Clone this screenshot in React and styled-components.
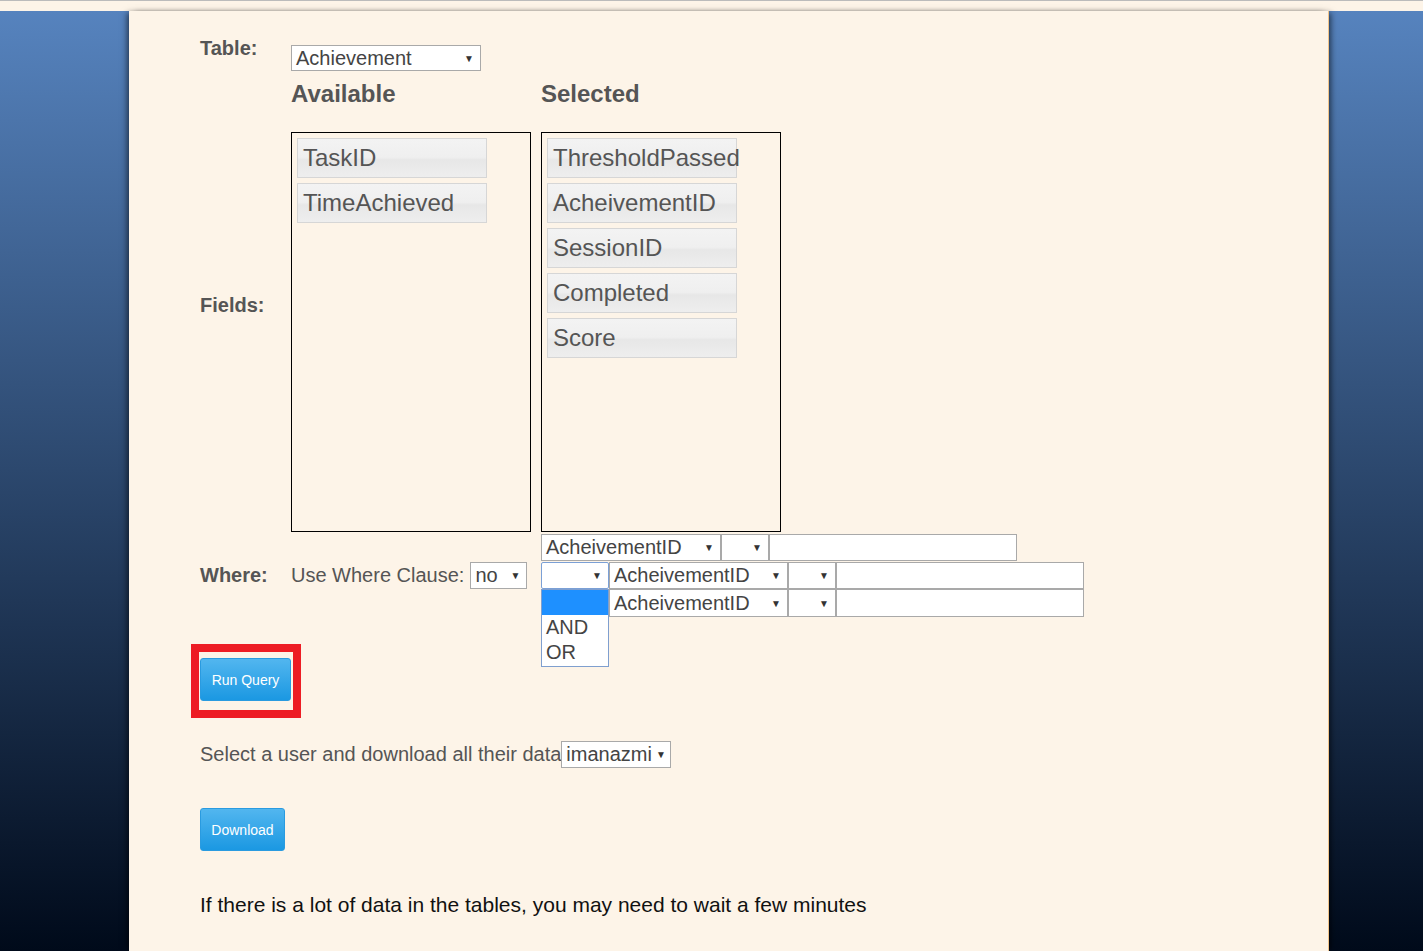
import React from 'react';
import styled, { createGlobalStyle } from 'styled-components';

const GlobalStyle = createGlobalStyle`
  html, body {
    margin: 0;
    padding: 0;
    background: #fdf4e8;
    font-family: "Liberation Sans", Arial, sans-serif;
  }
  #root {
    border-top: 1px solid #bbbbbb;
    padding-top: 10px;
    background: #fdf4e8;
  }
`;

const Frame = styled.div`
  display: grid;
  grid-template-columns: 129px 1200px 1fr;
  min-height: 940px;
`;

const Side = styled.div`
  background: linear-gradient(to bottom, #5683be 0%, #000a1a 100%);
`;

const Main = styled.main`
  position: relative;
  z-index: 1;
  box-sizing: border-box;
  background: #fdf4e8;
  border-right: 1px solid #f0c48a;
  box-shadow: -4px 0 6px -2px rgba(0, 0, 0, 0.55), 4px 0 6px -2px rgba(0, 0, 0, 0.55);
  padding: 25px 0 30px 71px;
`;

const Form = styled.div`
  display: grid;
  grid-template-columns: 91px 1fr;
`;

const Label = styled.div`
  font-size: 20px;
  line-height: 24px;
  font-weight: bold;
  color: #555;
  align-self: ${(p) => (p.$top ? 'start' : 'center')};
  margin-top: ${(p) => p.$mt || 0}px;
`;

const Cell = styled.div`
  margin-top: ${(p) => p.$mt || 0}px;
`;

const Select = styled.div`
  position: relative;
  box-sizing: border-box;
  width: ${(p) => p.$w}px;
  height: ${(p) => p.$h || 27}px;
  margin-top: ${(p) => p.$mt || 0}px;
  display: flex;
  align-items: center;
  justify-content: space-between;
  padding: 0 6px 0 4px;
  background: #fff;
  border: 1px solid ${(p) => (p.$focus ? '#7ba0d6' : '#a9a9a9')};
  border-radius: ${(p) => (p.$focus ? '2px' : '0')};
  font-size: 20px;
  color: #444;
  white-space: nowrap;
  flex-shrink: 0;
`;

const Arrow = styled.span`
  font-size: 10px;
  color: #333;
  margin-left: 4px;
`;

const Headings = styled.div`
  display: grid;
  grid-template-columns: 250px 250px;
`;

const Heading = styled.h3`
  margin: 0;
  font-size: 24px;
  line-height: 26px;
  font-weight: bold;
  color: #555;
`;

const Lists = styled.div`
  display: grid;
  grid-template-columns: 250px 250px;
  margin-top: 25px;
`;

const FieldList = styled.div`
  box-sizing: border-box;
  width: 240px;
  height: 400px;
  border: 1px solid #000;
  padding: 5px;
`;

const FieldItem = styled.div`
  box-sizing: border-box;
  width: 190px;
  height: 40px;
  margin-bottom: 5px;
  padding-left: 5px;
  border: 1px solid #d6d6d6;
  background: linear-gradient(to bottom, #f3f3f3 0%, #efefef 48%, #e7e7e7 55%, #eeeeee 100%);
  font-size: 24px;
  line-height: 38px;
  color: #555;
  white-space: nowrap;
`;

const WhereCell = styled.div`
  display: grid;
  grid-template-columns: 250px auto;
  align-items: center;
  margin-top: 1px;
`;

const UseWhere = styled.div`
  display: flex;
  align-items: center;
  gap: 6px;
  font-size: 20px;
  color: #555;
`;

const Conditions = styled.div`
  display: flex;
  flex-direction: column;
`;

const CondRow = styled.div`
  display: flex;
  height: 28px;
  align-items: flex-end;
`;

const TextInput = styled.div`
  box-sizing: border-box;
  width: 248px;
  height: ${(p) => p.$h || 27}px;
  background: #fff;
  border: 1px solid #a9a9a9;
`;

const Dropdown = styled.ul`
  position: absolute;
  top: 26px;
  left: -1px;
  z-index: 5;
  box-sizing: border-box;
  width: 68px;
  margin: 0;
  padding: 0 0 1px;
  list-style: none;
  background: #fff;
  border: 1px solid #7f9fcf;
`;

const Option = styled.li`
  height: 25px;
  line-height: 25px;
  padding-left: 4px;
  font-size: 20px;
  color: ${(p) => (p.$active ? '#fff' : '#444')};
  background: ${(p) => (p.$active ? '#1e90ff' : 'transparent')};
`;

const RedFrame = styled.div`
  display: inline-block;
  margin: 27px 0 0 -9px;
  border: 8px solid #ed1c24;
  padding: 6px 2px 9px 1px;
`;

const Button = styled.button`
  display: block;
  box-sizing: border-box;
  width: ${(p) => p.$w}px;
  height: 43px;
  padding: 0;
  border: 1px solid #2a9be0;
  border-radius: 3px;
  background: linear-gradient(to bottom, #52b6ef 0%, #1b98e2 100%);
  color: #fff;
  font-family: "Liberation Sans", Arial, sans-serif;
  font-size: 14px;
  margin-top: ${(p) => p.$mt || 0}px;
`;

const UserRow = styled.div`
  display: flex;
  align-items: center;
  margin-top: 23px;
  font-size: 20px;
  color: #555;
`;

const Note = styled.p`
  margin: 42px 0 0;
  font-size: 21px;
  line-height: 24px;
  color: #111;
`;

const available = ['TaskID', 'TimeAchieved'];
const selected = ['ThresholdPassed', 'AcheivementID', 'SessionID', 'Completed', 'Score'];

function Sel({ w, h, mt, focus, children, value }) {
  return (
    <Select $w={w} $h={h} $mt={mt} $focus={focus}>
      <span>{value}</span>
      <Arrow>▼</Arrow>
      {children}
    </Select>
  );
}

export default function App() {
  return (
    <>
      <GlobalStyle />
      <Frame>
        <Side />
        <Main>
          <Form>
            <Label $top>Table:</Label>
            <Cell>
              <Sel w={190} h={26} mt={9} value="Achievement" />
            </Cell>

            <Label $mt={6}>Fields:</Label>
            <Cell $mt={10}>
              <Headings>
                <Heading>Available</Heading>
                <Heading>Selected</Heading>
              </Headings>
              <Lists>
                <FieldList>
                  {available.map((f) => (
                    <FieldItem key={f}>{f}</FieldItem>
                  ))}
                </FieldList>
                <FieldList>
                  {selected.map((f) => (
                    <FieldItem key={f}>{f}</FieldItem>
                  ))}
                </FieldList>
              </Lists>
            </Cell>

            <Label>Where:</Label>
            <WhereCell>
              <UseWhere>
                Use Where Clause:
                <Sel w={57} value="no" />
              </UseWhere>
              <Conditions>
                <CondRow>
                  <Sel w={180} value="AcheivementID" />
                  <Sel w={48} value="" />
                  <TextInput />
                </CondRow>
                <CondRow>
                  <Sel w={68} value="" focus>
                    <Dropdown>
                      <Option $active>&nbsp;</Option>
                      <Option>AND</Option>
                      <Option>OR</Option>
                    </Dropdown>
                  </Sel>
                  <Sel w={179} value="AcheivementID" />
                  <Sel w={48} value="" />
                  <TextInput />
                </CondRow>
                <CondRow>
                  <Sel w={68} value="" />
                  <Sel w={179} h={28} value="AcheivementID" />
                  <Sel w={48} h={28} value="" />
                  <TextInput $h={28} />
                </CondRow>
              </Conditions>
            </WhereCell>
          </Form>

          <RedFrame>
            <Button $w={91}>Run Query</Button>
          </RedFrame>

          <UserRow>
            Select a user and download all their data
            <Sel w={110} value="imanazmi" />
          </UserRow>

          <Button $w={85} $mt={40}>Download</Button>

          <Note>If there is a lot of data in the tables, you may need to wait a few minutes</Note>
        </Main>
        <Side />
      </Frame>
    </>
  );
}
